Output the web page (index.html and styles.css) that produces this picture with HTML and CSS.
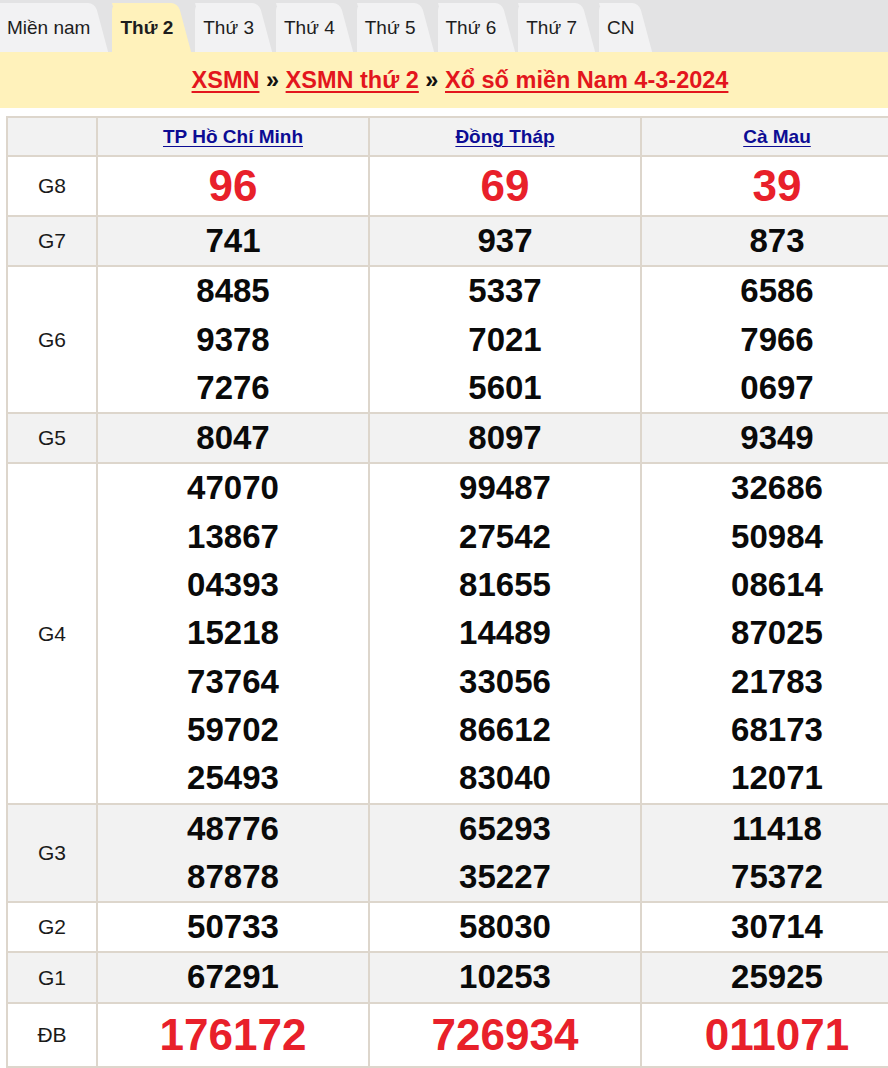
FILE: index.html
```html
<!DOCTYPE html>
<html lang="vi">
<head>
<meta charset="utf-8">
<title>XSMN thứ 2</title>
<link rel="stylesheet" href="styles.css">
</head>
<body>
<nav class="tabs">
  <a class="tab first" href="#">Miền nam</a>
  <a class="tab active" href="#">Thứ 2</a>
  <a class="tab" href="#">Thứ 3</a>
  <a class="tab" href="#">Thứ 4</a>
  <a class="tab" href="#">Thứ 5</a>
  <a class="tab" href="#">Thứ 6</a>
  <a class="tab" href="#">Thứ 7</a>
  <a class="tab" href="#">CN</a>
</nav>
<div class="crumb">
  <a href="#">XSMN</a> » <a href="#">XSMN thứ 2</a> » <a href="#">Xổ số miền Nam 4-3-2024</a>
</div>
<div class="wrap">
<table class="kq">
  <colgroup><col class="c-lbl"><col class="c-num"><col class="c-num"><col class="c-num"></colgroup>
  <thead>
    <tr class="hd"><th></th><th><a href="#">TP Hồ Chí Minh</a></th><th><a href="#">Đồng Tháp</a></th><th><a href="#">Cà Mau</a></th></tr>
  </thead>
  <tbody>
    <tr class="g8"><td class="lbl">G8</td><td class="big">96</td><td class="big">69</td><td class="big">39</td></tr>
    <tr class="alt"><td class="lbl">G7</td><td><div>741</div></td><td><div>937</div></td><td><div>873</div></td></tr>
    <tr><td class="lbl">G6</td><td><div>8485</div><div>9378</div><div>7276</div></td><td><div>5337</div><div>7021</div><div>5601</div></td><td><div>6586</div><div>7966</div><div>0697</div></td></tr>
    <tr class="alt"><td class="lbl">G5</td><td><div>8047</div></td><td><div>8097</div></td><td><div>9349</div></td></tr>
    <tr><td class="lbl">G4</td>
      <td><div>47070</div><div>13867</div><div>04393</div><div>15218</div><div>73764</div><div>59702</div><div>25493</div></td>
      <td><div>99487</div><div>27542</div><div>81655</div><div>14489</div><div>33056</div><div>86612</div><div>83040</div></td>
      <td><div>32686</div><div>50984</div><div>08614</div><div>87025</div><div>21783</div><div>68173</div><div>12071</div></td></tr>
    <tr class="alt"><td class="lbl">G3</td><td><div>48776</div><div>87878</div></td><td><div>65293</div><div>35227</div></td><td><div>11418</div><div>75372</div></td></tr>
    <tr><td class="lbl">G2</td><td><div>50733</div></td><td><div>58030</div></td><td><div>30714</div></td></tr>
    <tr class="alt"><td class="lbl">G1</td><td><div>67291</div></td><td><div>10253</div></td><td><div>25925</div></td></tr>
    <tr class="db"><td class="lbl">ĐB</td><td class="big">176172</td><td class="big">726934</td><td class="big">011071</td></tr>
  </tbody>
</table>
</div>
</body>
</html>
```

FILE: styles.css
```css
html, body {
  margin: 0;
  padding: 0;
  background: #fff;
  overflow-x: hidden;
}
body {
  font-family: "Liberation Sans", Arial, sans-serif;
  color: #111;
}

.tabs {
  display: flex;
  align-items: flex-end;
  height: 52px;
  background: #e3e3e4;
  padding: 0;
}
.tab {
  position: relative;
  z-index: 0;
  display: block;
  height: 49px;
  line-height: 49px;
  padding: 0 18px 0 8px;
  margin-right: 4px;
  font-size: 19px;
  color: #1d1d1d;
  text-decoration: none;
  white-space: nowrap;
}
.tab::before,
.tab::after {
  content: "";
  position: absolute;
  z-index: -1;
  top: 0;
  bottom: 0;
  background: #f2f2f3;
}
.tab::before {
  left: 0;
  width: 30px;
  border-top-left-radius: 7px;
}
.tab::after {
  left: 0;
  right: 13px;
  border-top-right-radius: 7px;
  transform-origin: top left;
  transform: skewX(15deg);
}
.tab.first {
  margin-left: -1px;
}
.tab.active {
  font-weight: bold;
}
.tab.active::before,
.tab.active::after {
  background: #fff2bb;
}

.crumb {
  background: #fff2bb;
  height: 56px;
  line-height: 56px;
  padding-left: 32px;
  text-align: center;
  font-size: 23.5px;
  font-weight: bold;
  color: #111;
}
.crumb a {
  color: #e3161d;
  text-decoration: underline;
  text-decoration-thickness: 2px;
  text-underline-offset: 3px;
}

.wrap {
  margin-top: 8px;
  padding-left: 6px;
}
.kq {
  border-collapse: collapse;
  table-layout: fixed;
  width: 908px;
  border: 2px solid #ddd6cc;
}
.c-lbl { width: 90px; }
.c-num { width: 272px; }
.kq th,
.kq td {
  border: 2px solid #ddd6cc;
  padding: 0;
  text-align: center;
  vertical-align: middle;
}
.kq th {
  background: #f2f2f2;
  height: 37px;
  line-height: 37px;
  font-size: 19px;
  font-weight: bold;
}
.kq th a {
  color: #0c0c94;
  text-decoration: underline;
  text-underline-offset: 3px;
}
.kq td {
  font-size: 33px;
  font-weight: bold;
  color: #0a0a0a;
}
.kq td div {
  line-height: 48.3px;
}
.kq td.lbl {
  font-size: 21px;
  font-weight: normal;
  color: #1a1a1a;
}
.kq tr.alt td {
  background: #f2f2f2;
}
.kq td.big {
  font-size: 44px;
  color: #e8202a;
}
.kq tr.g8 td {
  height: 58px;
}
.kq tr.db td {
  height: 62.5px;
}
```
